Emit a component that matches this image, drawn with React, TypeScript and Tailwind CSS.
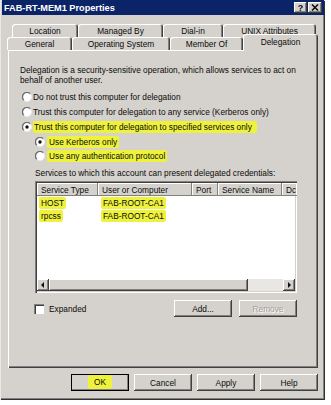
import React from 'react';

const raised = 'shadow-[inset_-1px_-1px_0_#404040,inset_1px_1px_0_#ffffff,inset_-2px_-2px_0_#808080]';
const sunken = 'shadow-[inset_1px_1px_0_#808080,inset_2px_2px_0_#404040,inset_-1px_-1px_0_#ffffff,inset_-2px_-2px_0_#d4d0c8]';
const mark = 'bg-[#eef23c] rounded-[2px]';

const topTabs = [
  { label: 'Location', w: 'w-[66px]' },
  { label: 'Managed By', w: 'w-[85px]' },
  { label: 'Dial-in', w: 'w-[60px]' },
  { label: 'UNIX Attributes', w: 'w-[93px]' },
];
const bottomTabs = [
  { label: 'General', w: 'w-[65px]' },
  { label: 'Operating System', w: 'w-[98px]' },
  { label: 'Member Of', w: 'w-[73px]' },
];

const columns = [
  { label: 'Service Type', w: 'w-[61px]' },
  { label: 'User or Computer', w: 'w-[94px]' },
  { label: 'Port', w: 'w-[26px]' },
  { label: 'Service Name', w: 'w-[64px]' },
  { label: 'Dc', w: 'w-[30px]' },
];

const services = [
  { type: 'HOST', host: 'FAB-ROOT-CA1' },
  { type: 'rpcss', host: 'FAB-ROOT-CA1' },
];

function Radio({ checked }: { checked?: boolean }) {
  return (
    <svg width="10" height="10" viewBox="0 0 10 10" className="shrink-0">
      <circle cx="5" cy="5" r="4.5" fill="#ffffff" />
      <path d="M1.8 8.2 A4.5 4.5 0 0 1 8.2 1.8" fill="none" stroke="#6a6a6a" strokeWidth="1.3" />
      <path d="M8.2 1.8 A4.5 4.5 0 0 1 1.8 8.2" fill="none" stroke="#ececec" strokeWidth="1" />
      {checked && <circle cx="5" cy="5" r="1.7" fill="#111111" />}
    </svg>
  );
}

function Tab({ label, w }: { label: string; w: string }) {
  return (
    <div
      className={`${w} h-full flex items-center justify-center rounded-t-[3px] shadow-[inset_1px_1px_0_#ffffff,inset_-1px_0_0_#404040,inset_-2px_0_0_#808080]`}
    >
      {label}
    </div>
  );
}

function Button({ label, disabled, isDefault, children }: { label?: string; disabled?: boolean; isDefault?: boolean; children?: React.ReactNode }) {
  return (
    <div
      className={`w-[58px] h-[17px] flex items-center justify-center ${raised} ${
        isDefault ? 'outline outline-1 outline-black -outline-offset-1' : ''
      } ${disabled ? 'text-[#a09e9a] [text-shadow:1px_1px_0_#ffffff]' : ''}`}
    >
      {children ?? label}
    </div>
  );
}

export default function App() {
  return (
    <div className="w-[331px] h-[405px] bg-white overflow-hidden font-['Liberation_Sans',Arial,sans-serif] text-[8.3px] leading-[10px] text-[#0a0a0a]">
      <div className="w-[325px] h-[400px] bg-[#d5d2cd] flex flex-col shadow-[inset_1px_1px_0_#e8e8e8,inset_-1px_-1px_0_#303030,inset_-2px_-2px_0_#808080]">
        {/* title bar */}
        <div className="ml-[2px] mr-[1px] h-[15px] bg-[#0b2468] flex items-center justify-between pl-[2px] pr-[2px]">
          <span className="text-white font-bold text-[9.2px]">FAB-RT-MEM1 Properties</span>
          <div className="flex gap-[1px]">
            <div className={`w-[13px] h-[11px] bg-[#d5d2cd] flex items-center justify-center font-bold text-[9px] ${raised}`}>?</div>
            <div className={`w-[14px] h-[11px] bg-[#d5d2cd] flex items-center justify-center ${raised}`}>
              <svg width="8" height="7" viewBox="0 0 8 7">
                <path d="M1 0.5 L7 6.5 M7 0.5 L1 6.5" stroke="#111" strokeWidth="1.6" />
              </svg>
            </div>
          </div>
        </div>

        {/* tabs */}
        <div className="mt-[9px] ml-[12px] h-[13px] flex">
          {topTabs.map((t) => (
            <Tab key={t.label} label={t.label} w={t.w} />
          ))}
        </div>
        <div className="ml-[7px] h-[13px] flex items-end">
          {bottomTabs.map((t) => (
            <Tab key={t.label} label={t.label} w={t.w} />
          ))}
          <div className="relative z-10 w-[75px] h-[17px] -mb-[1px] bg-[#d5d2cd] flex items-start justify-center pt-[3px] rounded-t-[3px] shadow-[inset_1px_1px_0_#ffffff,inset_-1px_0_0_#404040,inset_-2px_0_0_#808080]">
            Delegation
          </div>
        </div>

        {/* panel */}
        <div className="ml-[8px] w-[310px] h-[318px] pl-[12px] pt-[15px] shadow-[inset_1px_1px_0_#ffffff,inset_-1px_-1px_0_#404040,inset_-2px_-2px_0_#808080]">
          <p>Delegation is a security-sensitive operation, which allows services to act on</p>
          <p>behalf of another user.</p>

          <div className="mt-[4px] ml-[2px]">
            <div className="h-[15px] flex items-center gap-[1px]">
              <Radio />
              <span>Do not trust this computer for delegation</span>
            </div>
            <div className="h-[15px] flex items-center gap-[1px]">
              <Radio />
              <span>Trust this computer for delegation to any service (Kerberos only)</span>
            </div>
            <div className="h-[15px] flex items-center gap-[1px]">
              <Radio checked />
              <span className={`${mark} pl-[1px] pr-[5px] py-[1px]`}>Trust this computer for delegation to specified services only</span>
            </div>
          </div>

          <div className="ml-[15px]">
            <div className="h-[15px] flex items-center gap-[2px]">
              <Radio checked />
              <span className={`${mark} px-[2px] py-[1px]`}>Use Kerberos only</span>
            </div>
            <div className="h-[14px] flex items-center gap-[2px]">
              <Radio />
              <span className={`${mark} px-[2px] py-[1px]`}>Use any authentication protocol</span>
            </div>

            <p className="mt-[5px]">Services to which this account can present delegated credentials:</p>

            {/* list view */}
            <div className={`mt-[3px] w-[262px] h-[112px] bg-white p-[2px] flex flex-col overflow-hidden ${sunken}`}>
              <div className="h-[13px] flex shrink-0 bg-[#d5d2cd]">
                {columns.map((c) => (
                  <div
                    key={c.label}
                    className={`${c.w} shrink-0 h-full flex items-center pl-[4px] whitespace-nowrap overflow-hidden shadow-[inset_-1px_-1px_0_#808080,inset_1px_1px_0_#ffffff]`}
                  >
                    {c.label}
                  </div>
                ))}
              </div>
              <div className="flex-1">
                {services.map((s) => (
                  <div key={s.type} className="h-[13px] flex items-center">
                    <div className="w-[61px] pl-[2px]">
                      <span className={`${mark} px-[2px] py-[1px]`}>{s.type}</span>
                    </div>
                    <div className="pl-[3px]">
                      <span className={`${mark} px-[2px] py-[1px]`}>{s.host}</span>
                    </div>
                  </div>
                ))}
              </div>
              {/* horizontal scrollbar */}
              <div className="h-[12px] flex shrink-0 bg-[#e9e7e3]">
                <div className={`w-[12px] h-full bg-[#d5d2cd] flex items-center justify-center ${raised}`}>
                  <svg width="4" height="6" viewBox="0 0 4 6">
                    <path d="M3 0 L0 3 L3 6 Z" fill="#111" />
                  </svg>
                </div>
                <div className={`w-[199px] h-full bg-[#d5d2cd] ${raised}`} />
                <div className="flex-1" />
                <div className={`w-[12px] h-full bg-[#d5d2cd] flex items-center justify-center ${raised}`}>
                  <svg width="4" height="6" viewBox="0 0 4 6">
                    <path d="M1 0 L4 3 L1 6 Z" fill="#111" />
                  </svg>
                </div>
              </div>
            </div>

            <div className="mt-[7px] w-[262px] h-[17px] flex items-center justify-between">
              <div className="flex items-center gap-[5px] -ml-[1px]">
                <div className="w-[10px] h-[10px] bg-white shadow-[inset_1px_1px_0_#808080,inset_2px_2px_0_#404040,inset_-1px_-1px_0_#ffffff]" />
                <span>Expanded</span>
              </div>
              <div className="flex gap-[7px]">
                <Button label="Add..." />
                <Button label="Remove" disabled />
              </div>
            </div>
          </div>
        </div>

        {/* dialog buttons */}
        <div className="mt-[6px] pr-[7px] flex justify-end gap-[5px]">
          <Button isDefault>
            <span className={`${mark} px-[6px] py-[2px] -mt-[2px]`}>OK</span>
          </Button>
          <Button label="Cancel" />
          <Button label="Apply" />
          <Button label="Help" />
        </div>
      </div>
    </div>
  );
}
